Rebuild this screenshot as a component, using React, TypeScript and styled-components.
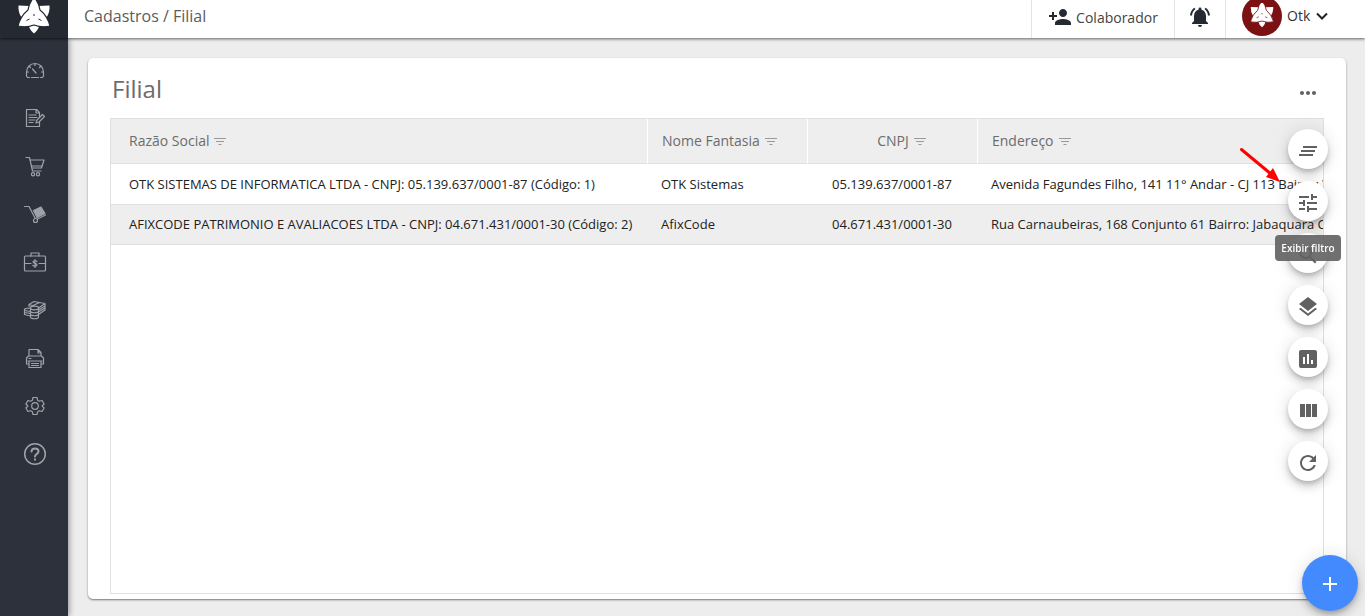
import React from "react";
import styled, { createGlobalStyle } from "styled-components";

const GlobalStyle = createGlobalStyle`
  *, *::before, *::after { box-sizing: border-box; }
  html, body, #root { height: 100%; margin: 0; }
  body {
    font-family: "Open Sans", "Liberation Sans", sans-serif;
    background: #ededed;
    color: #212121;
    overflow: hidden;
  }
  button { font: inherit; border: 0; padding: 0; cursor: pointer; }
  a { color: inherit; text-decoration: none; }
`;

const Page = styled.div`
  display: flex;
  flex-direction: column;
  height: 100vh;
  overflow: hidden;
`;

const TopBar = styled.header`
  display: flex;
  flex: none;
  height: 38px;
  background: #fff;
  position: relative;
  z-index: 2;
  box-shadow: 0 1px 3px rgba(0, 0, 0, 0.6);
`;

const Brand = styled.a`
  display: flex;
  justify-content: center;
  align-items: flex-start;
  width: 68px;
  background: #252932;
  overflow: hidden;
`;

const Breadcrumb = styled.nav`
  flex: 1;
  padding-left: 16px;
  font-size: 16px;
  line-height: 32px;
  color: #5c5c5c;
`;

const BarButton = styled.button<{ $width: number }>`
  display: flex;
  align-items: center;
  justify-content: center;
  gap: 4px;
  width: ${(p) => p.$width}px;
  padding-bottom: 4px;
  background: transparent;
  border-left: 1px solid #e4e4e4;
  color: #252932;
  font-size: 14px;
`;

const BarLabel = styled.span`
  color: #444;
`;

const UserButton = styled.button`
  display: flex;
  align-items: flex-start;
  width: 140px;
  background: transparent;
  border-left: 1px solid #e4e4e4;
  padding-left: 16px;
`;

const UserLine = styled.span`
  display: flex;
  align-items: center;
  height: 32px;
  font-size: 14px;
  color: #333;
`;

const UserName = styled.span`
  padding-bottom: 2px;
`;

const Avatar = styled.span`
  display: flex;
  align-items: center;
  justify-content: center;
  width: 40px;
  height: 40px;
  margin-right: 5px;
  border-radius: 50%;
  background: #7b1113;
`;

const Body = styled.div`
  display: flex;
  flex: 1;
  min-height: 0;
`;

const Sidebar = styled.nav`
  display: flex;
  flex-direction: column;
  flex: none;
  width: 68px;
  padding-top: 8px;
  background: #2d313c;
  box-shadow: 1px 0 6px rgba(0, 0, 0, 0.4);
`;

const SideLink = styled.a`
  display: flex;
  align-items: center;
  justify-content: center;
  height: 48px;
  padding-left: 2px;
  color: #a0a2a9;
`;

const Main = styled.main`
  display: flex;
  flex: 1;
  min-width: 0;
  padding: 20px 19px 17px 20px;
`;

const Card = styled.section`
  display: flex;
  flex-direction: column;
  flex: 1;
  min-width: 0;
  padding: 0 22px 5px;
  background: #fff;
  border-radius: 5px;
  box-shadow: 0 1px 2px rgba(0, 0, 0, 0.5);
`;

const CardHeader = styled.div`
  display: flex;
  align-items: center;
  justify-content: space-between;
  height: 60px;
  padding: 2px 4px 0 2px;
`;

const Title = styled.h1`
  margin: 0;
  font-size: 24px;
  line-height: 32px;
  font-weight: 400;
  color: #6c6c6c;
`;

const MoreButton = styled.button`
  display: flex;
  padding-top: 8px;
  background: transparent;
  color: #616161;
`;

const GridFrame = styled.div`
  flex: 1;
  min-height: 0;
  border: 1px solid #e0e0e0;
  overflow: hidden;
`;

const Table = styled.table`
  width: 1400px;
  table-layout: fixed;
  border-collapse: separate;
  border-spacing: 0;
`;

const Column = styled.col<{ $width?: number }>`
  width: ${(p) => (p.$width ? `${p.$width}px` : "auto")};
`;

const HeadCell = styled.th<{ $first?: boolean; $center?: boolean }>`
  height: 45px;
  padding: 0 14px 2px ${(p) => (p.$first ? 18 : p.$center ? 32 : 14)}px;
  background: #eee;
  border-bottom: 1px solid #e0e0e0;
  border-right: 1px solid #fff;
  text-align: ${(p) => (p.$center ? "center" : "left")};
  font-size: 14px;
  font-weight: 400;
  color: #6c6c6c;
  white-space: nowrap;
  svg { margin-left: 5px; vertical-align: -1px; }
`;

const Row = styled.tr<{ $alt?: boolean }>`
  background: ${(p) => (p.$alt ? "#eee" : "#fff")};
`;

const Cell = styled.td<{ $first?: boolean; $center?: boolean }>`
  height: 40px;
  padding: 0 ${(p) => (p.$center ? 15 : 13)}px 1px ${(p) => (p.$first ? 18 : 13)}px;
  border-bottom: 1px solid #e0e0e0;
  text-align: ${(p) => (p.$center ? "center" : "left")};
  font-size: 13px;
  color: #212121;
  white-space: nowrap;
  ${Row}:first-child & { height: 41px; }
`;

const ActionRail = styled.div`
  position: fixed;
  top: 129px;
  right: 37px;
  z-index: 3;
  display: flex;
  flex-direction: column;
  gap: 12px;
`;

const RoundButton = styled.button`
  position: relative;
  display: flex;
  align-items: center;
  justify-content: center;
  width: 40px;
  height: 40px;
  padding-top: 4px;
  border-radius: 50%;
  background: #fff;
  color: #616161;
  box-shadow: 0 3px 5px -1px rgba(0, 0, 0, 0.2), 0 6px 10px rgba(0, 0, 0, 0.14),
    0 1px 18px rgba(0, 0, 0, 0.12);
  &:nth-child(2) { z-index: 1; }
`;

const Tooltip = styled.span`
  position: absolute;
  top: 54px;
  left: 50%;
  transform: translateX(-50%);
  width: 66px;
  border-radius: 4px;
  background: rgba(97, 97, 97, 0.9);
  color: #fff;
  font-size: 10px;
  font-weight: 600;
  line-height: 26px;
  text-align: center;
  white-space: nowrap;
`;

const AddButton = styled.button`
  position: fixed;
  right: 7px;
  bottom: 5px;
  z-index: 3;
  display: flex;
  align-items: center;
  justify-content: center;
  width: 56px;
  height: 56px;
  padding-top: 2px;
  border-radius: 50%;
  background: #448aff;
  color: #fff;
  box-shadow: 0 3px 5px -1px rgba(0, 0, 0, 0.2), 0 6px 10px rgba(0, 0, 0, 0.14),
    0 1px 18px rgba(0, 0, 0, 0.12);
`;

const Pointer = styled.svg`
  position: fixed;
  top: 146px;
  right: 83px;
  z-index: 5;
  pointer-events: none;
`;

const Glyph = ({ d, size = 24 }: { d: string; size?: number }) => (
  <svg width={size} height={size} viewBox="0 0 24 24" fill="currentColor" aria-hidden="true">
    <path d={d} />
  </svg>
);

const LineIcon = ({ children }: { children: React.ReactNode }) => (
  <svg
    width={24}
    height={24}
    viewBox="0 0 24 24"
    fill="none"
    stroke="currentColor"
    strokeWidth={1.2}
    strokeLinecap="round"
    strokeLinejoin="round"
    aria-hidden="true"
  >
    {children}
  </svg>
);

const Star = ({ size, line }: { size: number; line: string }) => (
  <svg width={size} height={size} viewBox="0 0 36 36" aria-hidden="true">
    <g fill="#fff">
      <path d="M2.500 5.500 L13.500 6 L12 12 L5.500 17.500 Q2 12 2.500 5.500Z" />
      <path d="M33.500 5.500 L22.500 6 L24 12 L30.500 17.500 Q34 12 33.500 5.500Z" />
      <path d="M12.500 25 L18 23 L23.500 25 Q22 30.500 18 33.500 Q14 30.500 12.500 25Z" />
      <path
        d="M18 -3 Q23 3 24 10 Q31.500 16 34 26 Q26 28 18 25 Q10 28 2 26 Q4.500 16 12 10 Q13 3 18 -3Z"
        stroke={line}
        strokeWidth="1.200"
      />
    </g>
    <path d="M10.500 20.500l3-1.500M25.500 20.500l-3-1.500M18 14v2" stroke={line} strokeWidth="1" />
  </svg>
);

const FilterMark = () => (
  <svg width={12} height={10} viewBox="0 0 12 10" fill="none" stroke="#999" aria-hidden="true">
    <path d="M0 1.500h12M2 4.500h8M4.500 7.500h3" />
  </svg>
);

const sideItems = [
  {
    label: "Painel",
    icon: (
      <path d="M6.500 19.500h-2l-1-1.500v-4a8.500 8.500 0 0 1 17 0v4l-1 1.500h-2M8.500 19.500h7M9.500 11l3.500 4M12 6v1.500M6.500 8.500l1 1M17.500 8.500l-1 1M4 14h1.500M18.500 14H20" />
    ),
  },
  {
    label: "Cadastros",
    icon: (
      <path d="M16.500 16v4.500h-13v-17h10l3 3V11M13 3.500V7h3.500M6 9h7M6 11.500h8M6 14h6M6 16.500h4M13 17l1-3 5.500-5.500 2 2L16 16z" />
    ),
  },
  {
    label: "Compras",
    icon: (
      <>
        <path d="M3 3.500h3.500L9.500 17h8.500M7 6h14l-2.500 8H9M8.500 12h10" />
        <circle cx="10" cy="20.300" r="1.600" />
        <circle cx="15" cy="20.300" r="1.600" />
      </>
    ),
  },
  {
    label: "Movimentações",
    icon: (
      <>
        <path d="M1.500 4.500H6L12 16M14.500 17l8-4" />
        <circle cx="12.500" cy="18.500" r="2" />
        <path d="M10.500 8.500l7.500-3.500 4 6.500-8 4z" fill="currentColor" />
      </>
    ),
  },
  {
    label: "Financeiro",
    icon: (
      <>
        <rect x="1.500" y="6" width="21" height="15" rx="1" />
        <path d="M8 6V3h8v3M1.500 13.500H8M16 13.500h6.500M14 11.500c-.5-1-4-1.200-4 .5 0 1.600 4 1 4 2.800 0 1.700-3.500 1.700-4.200.4M12 9.500v8" />
      </>
    ),
  },
  {
    label: "Patrimônio",
    icon: (
      <>
        <ellipse cx="11.500" cy="10" rx="4" ry="1.800" />
        <path d="M7.500 10v9c0 2.300 8 2.300 8 0v-9M7.500 13c0 2.300 8 2.300 8 0M7.500 16c0 2.300 8 2.300 8 0M7.500 10l-5 .5-1 1v5l6 1.500M1.500 12.500l6 1M1.500 14.500l6 1M6 8.500V6.500l5-3 11 2v6.500l-6.500 4.500M6 6.500l5 1.500M11 7l5.500-2.500M15.500 10l6.500-4.500M15.500 12l6.500-4M15.500 14l6.500-4" />
      </>
    ),
  },
  {
    label: "Impressão",
    icon: (
      <path d="M6 10V3.500h9l3 3V10M15 3.500V7h3M6 18H3.500v-6l2-2h13l2 2v6H18M6 15h12v6.500H6zM8.500 17.500h7M8.500 19.500h7M6 12.500h2M5 15h14" />
    ),
  },
  {
    label: "Configurações",
    icon: (
      <>
        <circle cx="12" cy="12" r="3.300" />
        <path d="M10 3.500h4l.6 2.700 1.900 1.100 2.600-.8 2 3.500-2 2 2 2-2 3.500-2.600-.8-1.900 1.100-.6 2.700h-4l-.6-2.700-1.900-1.100-2.600.8-2-3.500 2-2-2-2 2-3.500 2.600.8 1.900-1.100z" />
      </>
    ),
  },
  {
    label: "Ajuda",
    icon: (
      <g strokeWidth="1.500">
        <circle cx="12" cy="12" r="10.300" />
        <path d="M8.500 9.500c.2-4 7-4 7 0 0 2.500-3.500 2.500-3.500 5M12 17.300v.4" strokeWidth="2" />
      </g>
    ),
  },
];

const railItems = [
  { label: "Limpar", d: "M5 13h14v-2H5v2zm-2 4h14v-2H3v2zM7 7v2h14V7H7z" },
  {
    label: "Exibir filtro",
    tooltip: true,
    d: "M3 17v2h6v-2H3zM3 5v2h10V5H3zm10 16v-2h8v-2h-8v-2h-2v6h2zM7 9v2H3v2h4v2h2V9H7zm14 4v-2H11v2h10zm-6-4h2V7h4V5h-4V3h-2v6z",
  },
  {
    label: "Pesquisar",
    d: "M15.500 14h-.79l-.28-.27C15.410 12.590 16 11.110 16 9.500 16 5.910 13.090 3 9.500 3S3 5.910 3 9.500 5.910 16 9.500 16c1.610 0 3.090-.59 4.230-1.570l.27.28v.79l5 4.990L20.490 19l-4.990-5zm-6 0C7.010 14 5 11.990 5 9.500S7.010 5 9.500 5 14 7.010 14 9.500 11.990 14 9.500 14z",
  },
  {
    label: "Camadas",
    d: "M11.990 18.540l-7.370-5.730L3 14.070l9 7 9-7-1.630-1.270-7.380 5.740zM12 16l7.360-5.730L21 9l-9-7-9 7 1.630 1.270L12 16z",
  },
  {
    label: "Gráfico",
    d: "M19 3H5c-1.100 0-2 .9-2 2v14c0 1.100.9 2 2 2h14c1.100 0 2-.9 2-2V5c0-1.100-.9-2-2-2zM9 17H7v-7h2v7zm4 0h-2V7h2v10zm4 0h-2v-4h2v4z",
  },
  { label: "Colunas", d: "M10 18h5V5h-5v13zm-6 0h5V5H4v13zM16 5v13h5V5h-5z" },
  {
    label: "Atualizar",
    d: "M17.650 6.350C16.200 4.900 14.210 4 12 4c-4.420 0-7.990 3.580-7.990 8s3.570 8 7.990 8c3.730 0 6.840-2.550 7.730-6h-2.080c-.82 2.330-3.040 4-5.650 4-3.310 0-6-2.690-6-6s2.690-6 6-6c1.660 0 3.140.69 4.220 1.780L13 11h7V4l-2.350 2.350z",
  },
];

const columns = [
  { title: "Razão Social", width: 537 },
  { title: "Nome Fantasia", width: 160 },
  { title: "CNPJ", width: 170, center: true },
  { title: "Endereço" },
];

const rows = [
  [
    "OTK SISTEMAS DE INFORMATICA LTDA - CNPJ: 05.139.637/0001-87 (Código: 1)",
    "OTK Sistemas",
    "05.139.637/0001-87",
    "Avenida Fagundes Filho, 141 11° Andar - CJ 113 Bairro: V",
  ],
  [
    "AFIXCODE PATRIMONIO E AVALIACOES LTDA - CNPJ: 04.671.431/0001-30 (Código: 2)",
    "AfixCode",
    "04.671.431/0001-30",
    "Rua Carnaubeiras, 168 Conjunto 61 Bairro: Jabaquara C",
  ],
];

export default function App() {
  return (
    <Page>
      <GlobalStyle />
      <TopBar>
        <Brand href="#" aria-label="Início">
          <Star size={36} line="#252932" />
        </Brand>
        <Breadcrumb>Cadastros / Filial</Breadcrumb>
        <BarButton $width={143}>
          <Glyph d="M15 12c2.210 0 4-1.790 4-4s-1.790-4-4-4-4 1.790-4 4 1.790 4 4 4zm-9-2V7H4v3H1v2h3v3h2v-3h3v-2H6zm9 4c-2.670 0-8 1.340-8 4v2h16v-2c0-2.660-5.330-4-8-4z" />
          <BarLabel>Colaborador</BarLabel>
        </BarButton>
        <BarButton $width={51} aria-label="Notificações">
          <Glyph d="M7.580 4.080L6.150 2.650C3.750 4.480 2.170 7.300 2.030 10.500h2c.15-2.650 1.510-4.970 3.550-6.420zm12.390 6.420h2c-.15-3.200-1.730-6.020-4.120-7.850l-1.420 1.430c2.020 1.450 3.390 3.770 3.540 6.420zM18 11c0-3.070-1.640-5.640-4.500-6.320V4c0-.83-.67-1.500-1.500-1.500s-1.500.67-1.500 1.500v.68C7.630 5.360 6 7.920 6 11v5l-2 2v1h16v-1l-2-2v-5zm-6 11c.14 0 .27-.01.4-.04.65-.14 1.180-.58 1.440-1.180.1-.24.15-.5.15-.78h-4c.01 1.100.9 2 2.010 2z" />
        </BarButton>
        <UserButton>
          <UserLine>
            <Avatar>
              <Star size={26} line="#7b1113" />
            </Avatar>
            <UserName>Otk</UserName>
            <svg width={24} height={24} viewBox="0 0 24 24" fill="none" stroke="#222" strokeWidth={2} aria-hidden="true">
              <path d="M7 9.500l5 5 5-5" />
            </svg>
          </UserLine>
        </UserButton>
      </TopBar>
      <Body>
        <Sidebar aria-label="Menu">
          {sideItems.map((item) => (
            <SideLink key={item.label} href="#" aria-label={item.label}>
              <LineIcon>{item.icon}</LineIcon>
            </SideLink>
          ))}
        </Sidebar>
        <Main>
          <Card>
            <CardHeader>
              <Title>Filial</Title>
              <MoreButton aria-label="Mais opções">
                <Glyph d="M6 10c-1.100 0-2 .9-2 2s.9 2 2 2 2-.9 2-2-.9-2-2-2zm12 0c-1.100 0-2 .9-2 2s.9 2 2 2 2-.9 2-2-.9-2-2-2zm-6 0c-1.100 0-2 .9-2 2s.9 2 2 2 2-.9 2-2-.9-2-2-2z" />
              </MoreButton>
            </CardHeader>
            <GridFrame>
              <Table>
                <colgroup>
                  {columns.map((c) => (
                    <Column key={c.title} $width={c.width} />
                  ))}
                </colgroup>
                <thead>
                  <tr>
                    {columns.map((c, i) => (
                      <HeadCell key={c.title} scope="col" $first={i === 0} $center={c.center}>
                        {c.title}
                        <FilterMark />
                      </HeadCell>
                    ))}
                  </tr>
                </thead>
                <tbody>
                  {rows.map((row, r) => (
                    <Row key={row[1]} $alt={r % 2 === 1}>
                      {row.map((text, i) => (
                        <Cell key={text} $first={i === 0} $center={columns[i].center}>
                          {text}
                        </Cell>
                      ))}
                    </Row>
                  ))}
                </tbody>
              </Table>
            </GridFrame>
          </Card>
        </Main>
      </Body>
      <ActionRail>
        {railItems.map((item) => (
          <RoundButton key={item.label} aria-label={item.label}>
            <Glyph d={item.d} />
            {item.tooltip && <Tooltip role="tooltip">{item.label}</Tooltip>}
          </RoundButton>
        ))}
      </ActionRail>
      <AddButton aria-label="Adicionar">
        <Glyph d="M19 13h-6v6h-2v-6H5v-2h6V5h2v6h6v2z" />
      </AddButton>
      <Pointer width={42} height={38} viewBox="0 0 42 38" aria-hidden="true">
        <path d="M1.500 3.500L31 28" stroke="#f00" strokeWidth="3" strokeLinecap="round" />
        <path d="M40 36L26 31L33 22Z" fill="#f00" />
      </Pointer>
    </Page>
  );
}
